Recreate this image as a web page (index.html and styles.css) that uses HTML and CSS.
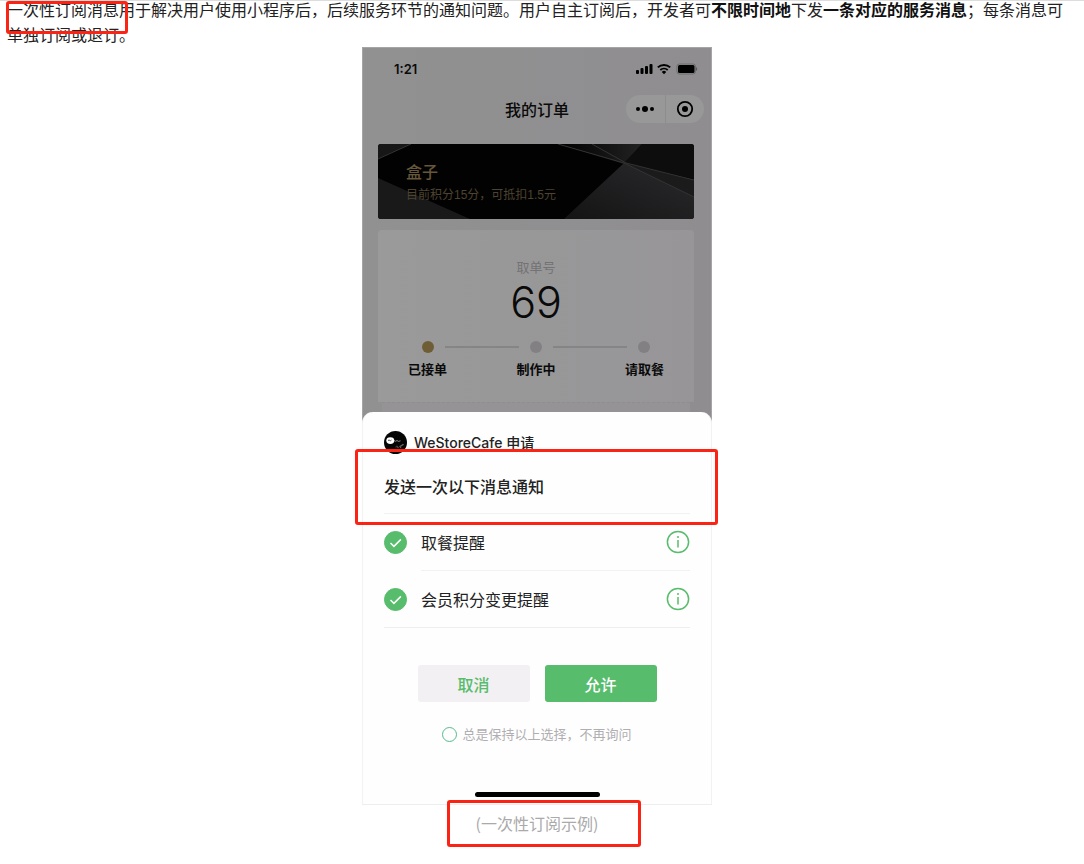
FILE: index.html
```
<!DOCTYPE html>
<html lang="zh-CN">
<head>
    <meta charset="UTF-8">
    <meta name="viewport" content="width=device-width, initial-scale=1.0">
    <title>一次性订阅消息</title>
    <link rel="stylesheet" href="styles.css">
</head>
<body>

<main class="container">
    <p class="intro">一次性订阅消息用于解决用户使用小程序后，后续服务环节的通知问题。用户自主订阅后，开发者可<strong>不限时间地</strong>下发<strong>一条对应的服务消息</strong>；每条消息可单独订阅或退订。<span class="mark mark-intro"></span></p>

    <figure class="example">
        <div class="phone">
            <!-- Página del pedido -->
            <div class="page">
                <div class="status">
                    <span>1:21</span>
                    <svg width="62" height="12" viewBox="0 0 62 12">
                        <rect x="0" y="7" width="3" height="4" rx="1"/>
                        <rect x="4.5" y="5" width="3" height="6" rx="1"/>
                        <rect x="9" y="3" width="3" height="8" rx="1"/>
                        <rect x="13.5" y="1" width="3" height="10" rx="1"/>
                        <path d="M21.8 4.4a9 9 0 0 1 12.4 0" fill="none" stroke="#000" stroke-width="2"/>
                        <path d="M24.3 7a5.4 5.4 0 0 1 7.4 0" fill="none" stroke="#000" stroke-width="1.8"/>
                        <path d="M28 11.2l-2.2-2.3a3.2 3.2 0 0 1 4.4 0z"/>
                        <rect x="40.9" y="1" width="18.6" height="10" rx="2.5" fill="none" stroke="#666" stroke-width="0.8"/>
                        <rect x="42" y="2" width="16.5" height="8" rx="1.5"/>
                        <path d="M60.6 4.5v3" stroke="#555" stroke-width="1"/>
                    </svg>
                </div>
                <div class="nav">
                    <h1>我的订单</h1>
                    <div class="capsule">
                        <button type="button" aria-label="更多">
                            <svg width="20" height="18" viewBox="0 0 20 18"><circle cx="3" cy="9" r="2"/><circle cx="10" cy="9" r="3"/><circle cx="17" cy="9" r="2"/></svg>
                        </button>
                        <button type="button" aria-label="关闭">
                            <svg width="18" height="18" viewBox="0 0 18 18"><circle cx="9" cy="9" r="7.2" fill="none" stroke="#000" stroke-width="1.8"/><circle cx="9" cy="9" r="3"/></svg>
                        </button>
                    </div>
                </div>

                <div class="member">
                    <svg class="member-bg" viewBox="0 0 316 75" preserveAspectRatio="none">
                        <defs>
                            <linearGradient id="g1" x1="0" y1="1" x2="1" y2="0">
                                <stop offset="0" stop-color="#141415"/>
                                <stop offset="1" stop-color="#2a292b"/>
                            </linearGradient>
                            <linearGradient id="g2" x1="0" y1="0" x2="1" y2="0">
                                <stop offset="0" stop-color="#000"/>
                                <stop offset="1" stop-color="#222"/>
                            </linearGradient>
                        </defs>
                        <rect width="316" height="75" fill="#020202"/>
                        <path d="M0 0h33L0 15z" fill="#171717"/>
                        <path d="M0 34l92 41H0z" fill="#19191a"/>
                        <path d="M180 0h84l-18 20z" fill="url(#g2)"/>
                        <path d="M264 0h52v35l-70-16z" fill="#0d0d0d"/>
                        <path d="M246 19l70 17v39H186z" fill="url(#g1)"/>
                        <path d="M246 19l70 34V36z" fill="#1b1b1c"/>
                        <path d="M0 15L33 0M180 0l66 19 70 34M214 0l34 19 68 17" fill="none" stroke="#343335" stroke-width="1"/>
                    </svg>
                    <h2>盒子</h2>
                    <p>目前积分15分，可抵扣1.5元</p>
                </div>

                <div class="order">
                    <p class="order-label">取单号</p>
                    <p class="order-number">69</p>
                    <ol class="steps">
                        <li class="done">已接单</li>
                        <li>制作中</li>
                        <li>请取餐</li>
                    </ol>
                </div>
                <div class="ticket"></div>
            </div>

            <!-- Panel de suscripción -->
            <form class="sheet">
                <div class="sheet-app">
                    <svg width="23" height="23" viewBox="0 0 23 23">
                        <circle cx="11.5" cy="11.5" r="11.5" fill="#050505"/>
                        <ellipse cx="6.3" cy="9.6" rx="4" ry="3.4" fill="#fff"/>
                        <path d="M4 9.8l1.2-1 1 1.2 1.3-1" fill="none" stroke="#222" stroke-width="0.7"/>
                        <path d="M10 9.5l1.5.8 1.5-.8 1.5.9 2-.6" fill="none" stroke="#aaa" stroke-width="0.8"/>
                        <path d="M12 16.5c0-2 2-2 1.5-.5s1.5 1 2-.5 1.5 0 1 1.5c1-4 3-5 2-2.5M16 15l4-1.5" fill="none" stroke="#77706c" stroke-width="0.7"/>
                    </svg>
                    <span>WeStoreCafe 申请</span>
                </div>
                <div class="sheet-title">
                    <h2>发送一次以下消息通知</h2>
                    <span class="mark mark-title"></span>
                </div>

                <ul class="messages">
                    <li>
                        <input type="checkbox" id="pickup" checked>
                        <div class="message">
                            <label for="pickup">取餐提醒</label>
                            <button type="button" aria-label="详情">
                                <svg width="24" height="24" viewBox="0 0 24 24"><circle cx="12" cy="12" r="10.6"/><path d="M12 10v7.5"/><path d="M12 6v2"/></svg>
                            </button>
                        </div>
                    </li>
                    <li>
                        <input type="checkbox" id="points" checked>
                        <div class="message">
                            <label for="points">会员积分变更提醒</label>
                            <button type="button" aria-label="详情">
                                <svg width="24" height="24" viewBox="0 0 24 24"><circle cx="12" cy="12" r="10.6"/><path d="M12 10v7.5"/><path d="M12 6v2"/></svg>
                            </button>
                        </div>
                    </li>
                </ul>

                <div class="actions">
                    <button type="button" class="btn">取消</button>
                    <button type="button" class="btn btn-primary">允许</button>
                </div>
                <div class="keep">
                    <input type="checkbox" id="keep">
                    <label for="keep">总是保持以上选择，不再询问</label>
                </div>
                <div class="home-bar"></div>
            </form>
        </div>
        <figcaption>(一次性订阅示例)<span class="mark mark-caption"></span></figcaption>
    </figure>
</main>

</body>
</html>
```
FILE: styles.css
```
* {
    box-sizing: border-box;
}
body {
    margin: 0;
    background-color: #fff;
    color: #222;
    font-family: "Noto Sans CJK SC", sans-serif;
    font-size: 16px;
}
h1, h2, p, ul, ol, figure {
    margin: 0;
    padding: 0;
}
ul, ol {
    list-style: none;
}
button {
    padding: 0;
    border: none;
    background: none;
    font-family: inherit;
    cursor: pointer;
}
svg {
    display: block;
}
.container {
    min-height: 100vh;
    border-top: 1px solid #ddd;
    padding: 0 17px 16px 7px;
}
.intro {
    position: relative;
    margin-top: -4px;
    line-height: 25px;
}
.intro strong {
    color: #111;
}
/* Recuadros rojos */
.mark {
    position: absolute;
    border: 3px solid #fb2314;
    border-radius: 3px;
    pointer-events: none;
}
.mark-intro {
    top: 4px;
    left: -1px;
    width: 122px;
    height: 33px;
}
.mark-title {
    top: -5px;
    left: -29px;
    right: -28px;
    bottom: -12px;
}
.mark-caption {
    top: -5px;
    left: -29px;
    right: -43px;
    bottom: -2px;
}
.example {
    display: flex;
    flex-direction: column;
    align-items: center;
}
.phone {
    width: 350px;
    max-width: 100%;
    border: 1px solid #eee;
}
.page {
    margin: -1px -1px 0;
    padding: 0 17px 0 15px;
    border: 1px solid #a5a5a5;
    border-bottom: none;
    background: linear-gradient(to right, #919191, #8f8d90);
    color: #0a0a0a;
}
.status {
    display: flex;
    justify-content: space-between;
    align-items: center;
    height: 42px;
    margin: 0 -4px 0 16px;
    font-family: Inter, sans-serif;
    font-size: 13px;
    font-weight: 600;
}
.nav {
    display: grid;
    grid-template-columns: 1fr auto 1fr;
    align-items: center;
    height: 38px;
    margin: 0 -10px 16px -8px;
}
.nav h1 {
    grid-column: 2;
    font-size: 16px;
    font-weight: 500;
    line-height: 24px;
}
.capsule {
    display: flex;
    justify-self: end;
    width: 78px;
    height: 28px;
    border-radius: 14px;
    background-color: #989898;
}
.capsule button {
    display: flex;
    flex: 1;
    align-items: center;
    justify-content: center;
}
.capsule button + button {
    border-left: 1px solid #8d8d8d;
}
.member {
    position: relative;
    height: 75px;
    padding: 15px 28px;
    border-radius: 3px;
    overflow: hidden;
    color: #67573a;
}
.member-bg {
    position: absolute;
    top: 0;
    left: 0;
    width: 100%;
    height: 100%;
}
.member h2,
.member p {
    position: relative;
}
.member h2 {
    font-size: 16px;
    font-weight: 500;
    line-height: 24px;
}
.member p {
    color: #4d4330;
    font-family: "Liberation Sans", "Noto Sans CJK SC", sans-serif;
    font-size: 12px;
    line-height: 24px;
}
.order {
    margin-top: 11px;
    padding: 27px 30px 23px;
    border-radius: 4px 4px 0 0;
    background: linear-gradient(to right, #999a99, #979598);
    text-align: center;
}
.order-label {
    color: #737274;
    font-size: 13px;
    line-height: 20px;
}
.order-number {
    font-family: Inter, sans-serif;
    font-size: 43px;
    font-weight: 300;
    line-height: 50px;
}
.steps {
    display: flex;
    justify-content: space-between;
    margin-top: 14px;
}
.steps li {
    position: relative;
    font-size: 13px;
    font-weight: 700;
    line-height: 20px;
}
.steps li::before {
    content: "";
    display: block;
    width: 12px;
    height: 12px;
    margin: 0 auto 6px;
    border-radius: 50%;
    background-color: #828083;
}
.steps .done::before {
    background-color: #6f5d36;
}
/* Línea entre dos pasos */
.steps li + li::after {
    content: "";
    position: absolute;
    top: 5px;
    right: 37px;
    width: 74px;
    height: 2px;
    background-color: #868487;
}
.ticket {
    height: 20px;
    margin: 0 4px;
    border-top: 1px dashed #8f8d90;
    background: #959396;
}
.sheet {
    position: relative;
    margin: -10px -1px 0;
    padding: 18px 21px 7px;
    border-radius: 11px 11px 0 0;
    background-color: #fefefe;
    border: 1px solid #f2f2f2;
    border-width: 0 1px;
}
.sheet-app {
    display: flex;
    align-items: center;
    gap: 7px;
    height: 24px;
    color: #222;
    font-family: Inter, "Noto Sans CJK SC", sans-serif;
    font-size: 14px;
    font-weight: 500;
}
.sheet-title {
    position: relative;
    padding: 20px 0 15px;
    border-bottom: 1px solid #f1f1f1;
}
.sheet-title h2 {
    color: #222;
    font-size: 16px;
    font-weight: 500;
    line-height: 24px;
}
.messages li {
    display: flex;
    align-items: center;
    gap: 14px;
}
.messages li:last-child {
    border-bottom: 1px solid #eee;
}
.message {
    display: flex;
    flex: 1;
    justify-content: space-between;
    align-items: center;
    height: 57px;
    border-bottom: 1px solid #f1f1f1;
}
.messages li:last-child .message {
    height: 56px;
    border-bottom: none;
}
.messages input {
    appearance: none;
    width: 23px;
    height: 23px;
    margin: 0;
    border: 1px solid #57bc6b;
    border-radius: 50%;
}
.messages input:checked {
    background: #57bc6b url("data:image/svg+xml,%3Csvg xmlns='http://www.w3.org/2000/svg' viewBox='0 0 21 21'%3E%3Cpath d='M5.5 11l3.4 3.4 7-7' fill='none' stroke='white' stroke-width='1.5'/%3E%3C/svg%3E");
}
.messages svg {
    fill: none;
    stroke: #57bc6b;
    stroke-width: 1.5;
}
.actions {
    display: flex;
    justify-content: center;
    gap: 15px;
    margin-top: 37px;
}
.btn {
    width: 112px;
    height: 37px;
    border-radius: 3px;
    background-color: #f2f0f2;
    color: #57bc6b;
    font-size: 16px;
    font-weight: 500;
}
.btn-primary {
    background-color: #57bc6b;
    color: #fff;
}
.keep {
    display: flex;
    justify-content: center;
    align-items: center;
    gap: 5px;
    margin-top: 22px;
    color: #b0aeb1;
    font-size: 13px;
    line-height: 20px;
}
.keep input {
    appearance: none;
    width: 15px;
    height: 15px;
    margin: 0;
    border: 1px solid #57bc8b;
    border-radius: 50%;
}
.keep input:checked {
    background-color: #57bc6b;
}
.home-bar {
    width: 125px;
    height: 5px;
    margin: 48px auto 0;
    border-radius: 3px;
    background-color: #000;
}
figcaption {
    position: relative;
    padding: 6px 0 10px;
    color: #aaa;
    font-size: 16px;
    line-height: 24px;
}
```
